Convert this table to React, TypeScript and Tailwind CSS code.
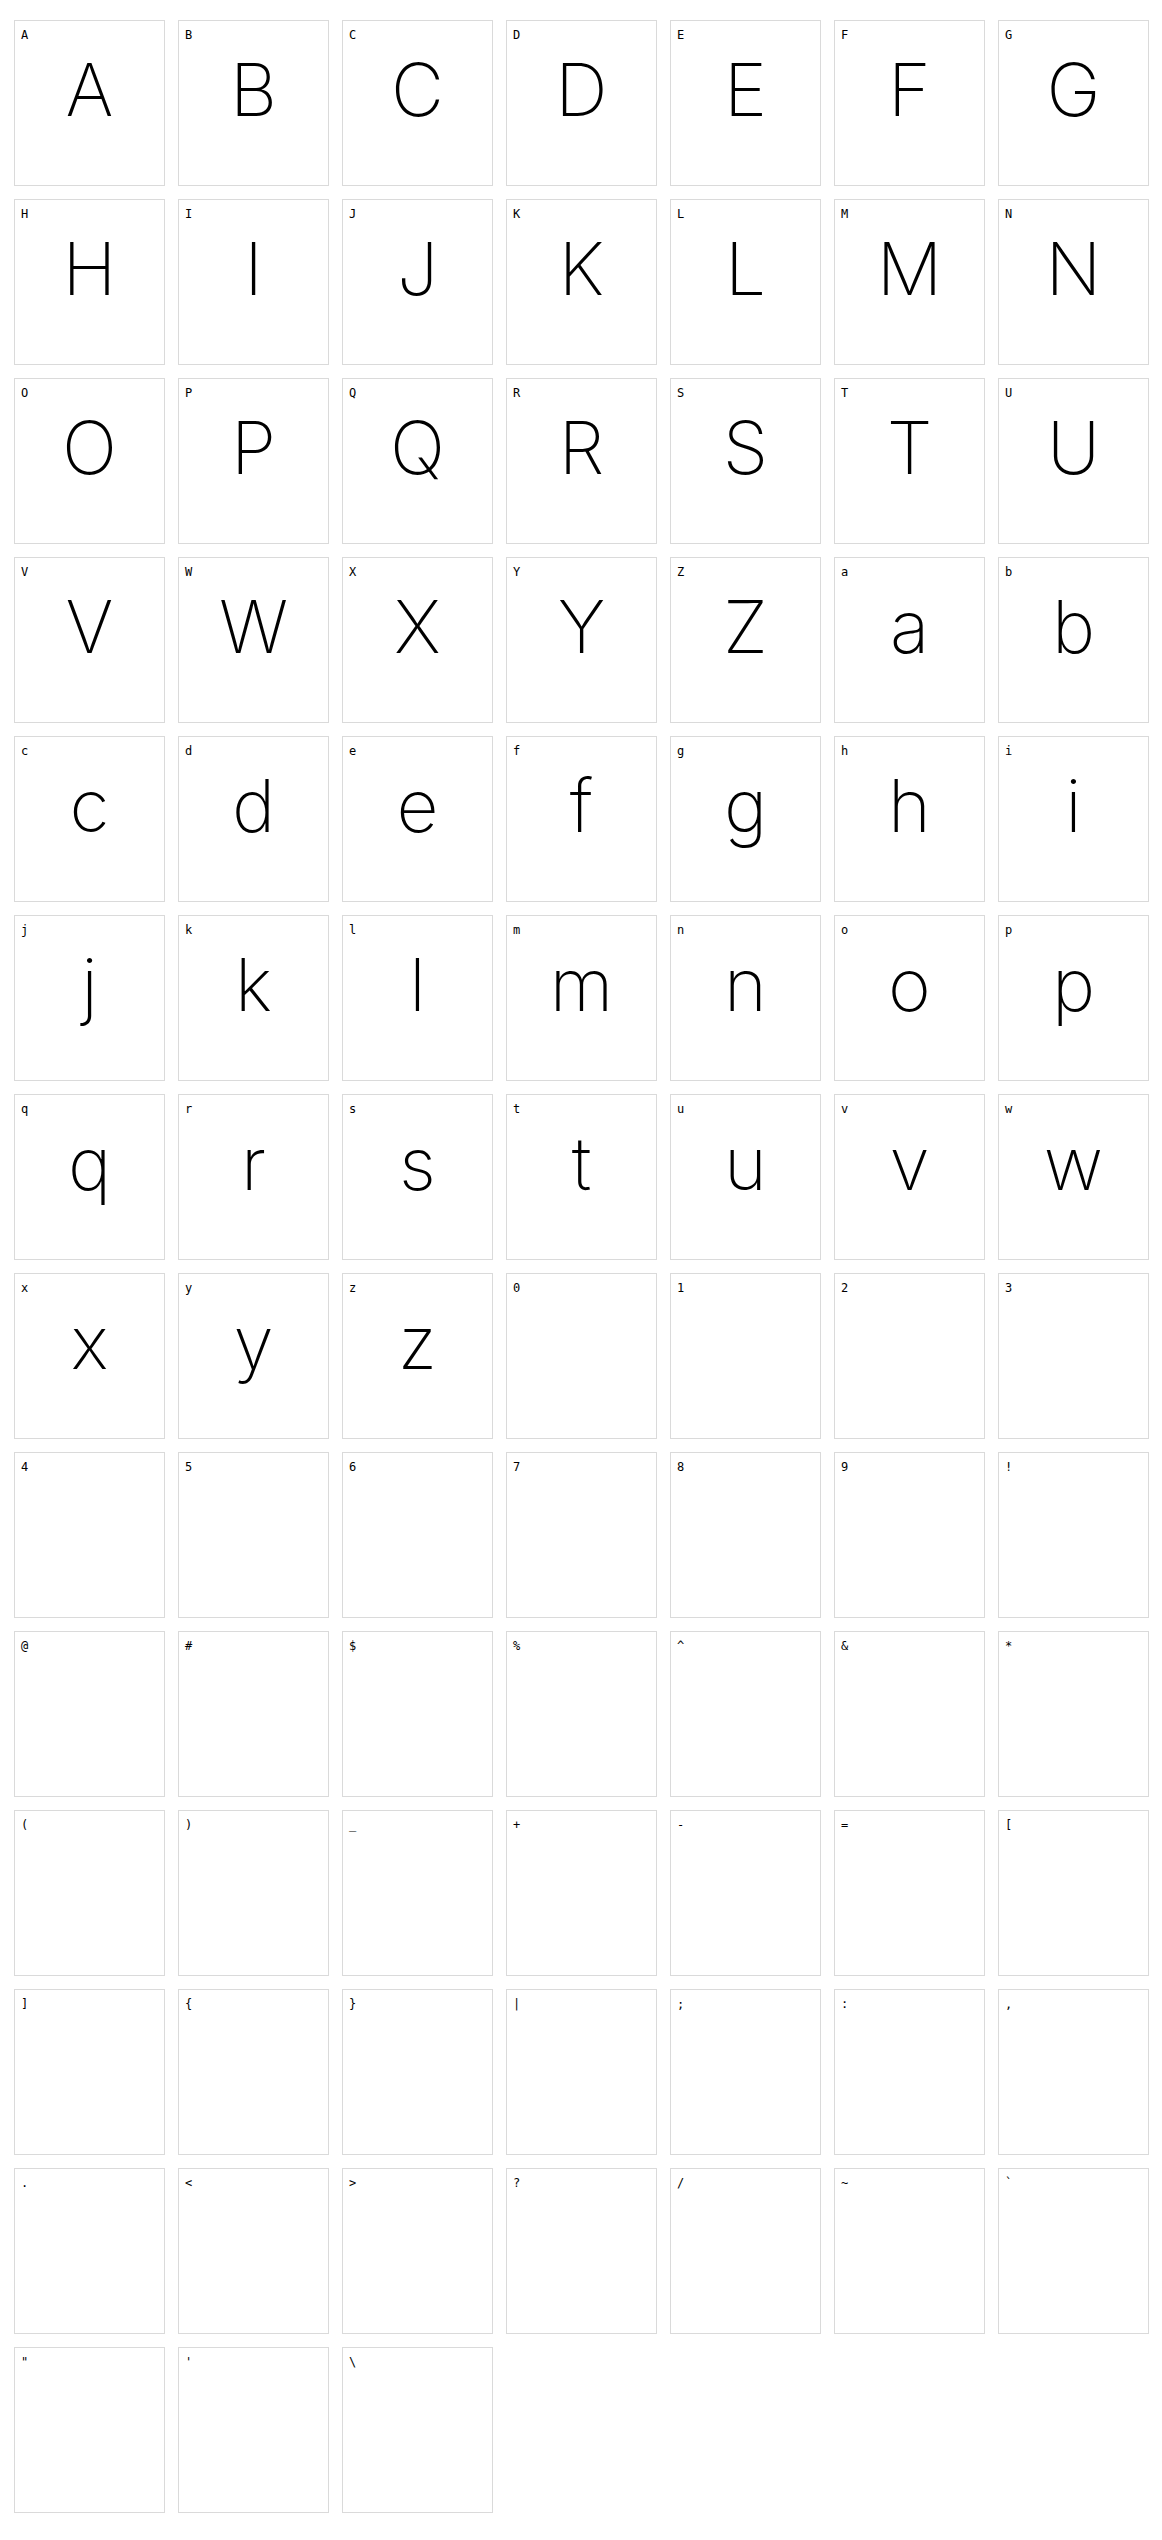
const LETTERS = 'ABCDEFGHIJKLMNOPQRSTUVWXYZabcdefghijklmnopqrstuvwxyz'.split('');
const OTHERS = '0123456789!@#$%^&*()_+-=[]{}|;:,.<>?/~`"\'\\'.split('');

function GlyphCell({ char, preview }: { char: string; preview: boolean }) {
  return (
    <div className="h-[166px] w-[151px] border border-[#dadada] bg-white">
      <div className="pl-[6px] pt-[9px] font-['DejaVu_Sans_Mono',monospace] text-[12px] leading-[11px] text-black antialiased">
        {char}
      </div>
      {preview && (
        <div className="mt-[12px] text-center font-['Inter',sans-serif] text-[73px] font-[250] leading-[74px] text-black">
          {char}
        </div>
      )}
    </div>
  );
}

export default function App() {
  return (
    <div className="min-h-screen bg-white pl-[14px] pt-[20px]">
      <div className="grid grid-cols-[repeat(7,151px)] gap-[13px]">
        {LETTERS.map((c) => (
          <GlyphCell key={c} char={c} preview />
        ))}
        {OTHERS.map((c, i) => (
          <GlyphCell key={'o' + i} char={c} preview={false} />
        ))}
      </div>
    </div>
  );
}
